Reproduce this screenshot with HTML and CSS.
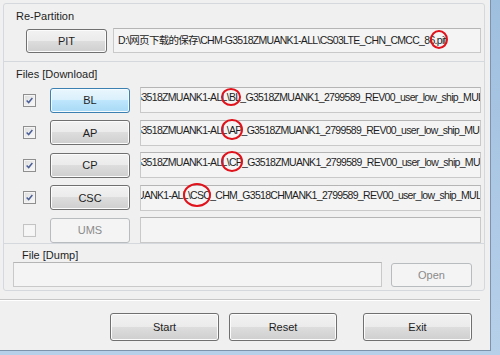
FILE: index.html
```html
<!DOCTYPE html>
<html lang="zh-CN">
<head>
  <meta charset="UTF-8" />
  <title>Odin - Files</title>
  <link rel="stylesheet" href="styles.css">
</head>
<body>
<div class="window">
  <div class="panel">
    <section class="group repart">
      <div class="caption">Re-Partition</div>
      <div class="pit-row">
        <button class="btn pit">PIT</button>
        <div class="field"><span class="txt">D:\网页下载的保存\CHM-G3518ZMUANK1-ALL\CS03LTE_CHN_CMCC_86<span class="mark m-pit">.pit</span></span></div>
      </div>
    </section>

    <section class="group files">
      <div class="caption">Files [Download]</div>
      <div class="rows">
        <span class="check on"><svg viewBox="0 0 11 11"><path d="M2 5.5 L4.5 8 L9 2.5"/></svg></span>
        <button class="btn hot">BL</button>
        <div class="field"><span class="txt cut">G3518ZMUANK1-ALL\<span class="mark m-bl">BL</span>_G3518ZMUANK1_2799589_REV00_user_low_ship_MULTI</span></div>

        <span class="check on"><svg viewBox="0 0 11 11"><path d="M2 5.5 L4.5 8 L9 2.5"/></svg></span>
        <button class="btn">AP</button>
        <div class="field"><span class="txt cut">G3518ZMUANK1-ALL\<span class="mark m-ap">AP</span>_G3518ZMUANK1_2799589_REV00_user_low_ship_MULTI</span></div>

        <span class="check on"><svg viewBox="0 0 11 11"><path d="M2 5.5 L4.5 8 L9 2.5"/></svg></span>
        <button class="btn">CP</button>
        <div class="field"><span class="txt cut">G3518ZMUANK1-ALL\<span class="mark m-cp">CP</span>_G3518ZMUANK1_2799589_REV00_user_low_ship_MULTI</span></div>

        <span class="check on"><svg viewBox="0 0 11 11"><path d="M2 5.5 L4.5 8 L9 2.5"/></svg></span>
        <button class="btn">CSC</button>
        <div class="field"><span class="txt cut2">UANK1-ALL\<span class="mark m-csc">CSC</span>_CHM_G3518CHMANK1_2799589_REV00_user_low_ship_MULTI</span></div>

        <span class="check"></span>
        <button class="btn off">UMS</button>
        <div class="field"></div>
      </div>
    </section>

    <section class="group dump">
      <div class="caption">File [Dump]</div>
      <div class="dump-row">
        <div class="field"></div>
        <button class="btn off open">Open</button>
      </div>
    </section>
  </div>

  <div class="sep"></div>

  <div class="actions">
    <button class="btn big">Start</button>
    <button class="btn big reset">Reset</button>
    <button class="btn big exit">Exit</button>
  </div>
</div>
</body>
</html>
```

FILE: styles.css
```css
:root {
  --bg: #f0f0f0;
  --line: #d5d8dc;
  --text: #1e1e1e;
  --red: #e0121b;
}

* { box-sizing: border-box; margin: 0; padding: 0; }

body {
  width: 500px;
  height: 355px;
  overflow: hidden;
  background: linear-gradient(#9fbfdf, #b7d0ea);
  font-family: 'Liberation Sans', Arial, 'Noto Sans CJK SC', sans-serif;
  font-size: 11px;
  color: var(--text);
}

.window {
  width: 491px;
  height: 351px;
  background: var(--bg);
  border-right: 1px solid #7c93ab;
  border-bottom: 1px solid #7c93ab;
  padding: 3px 0 0 3px;
}

.panel {
  width: 482px;
  height: 288px;
  border: 1px solid var(--line);
  border-radius: 3px;
  display: flex;
  flex-direction: column;
}

.group {
  padding: 6px 3px 0 0;
}

.group + .group {
  border-top: 1px solid var(--line);
}

.caption {
  line-height: 13px;
  padding-left: 12px;
}

/* re-partition */
.repart { height: 57px; }

.pit-row {
  display: flex;
  align-items: flex-start;
  margin-top: 5px;
}

.pit {
  flex: none;
  width: 81px;
  height: 24px;
  margin: 1px 6px 0 22px;
}

.pit-row .field {
  flex: 1;
  min-width: 0;
  height: 25px;
  padding: 5px 0 0 4px;
}

/* download rows */
.files { height: 182px; }

.rows {
  display: grid;
  grid-template-columns: 13px 80px minmax(0, 1fr);
  grid-auto-rows: 26px;
  column-gap: 14px;
  row-gap: 6.5px;
  align-items: center;
  padding-left: 19px;
  margin-top: 6px;
}

.rows .btn { height: 25px; }
.rows .btn + .field { margin-left: -4px; height: 26px; padding: 3px 0 0 1px; }

.check {
  width: 13px;
  height: 13px;
  border: 1px solid #8f8f8f;
  background: linear-gradient(135deg, #dcdcdc, #fbfbfb);
  box-shadow: inset 0 0 0 1px #f4f4f4;
  display: flex;
  align-items: center;
  justify-content: center;
}

.check svg { width: 9px; height: 9px; }
.check path { fill: none; stroke: #4a5f97; stroke-width: 1.8; }

.check:not(.on) {
  border-color: #c3c3c3;
  background: #f6f6f6;
}

/* fields */
.field {
  position: relative;
  background: #f4f4f4;
  border: 1px solid #c9c9c9;
  border-top-color: #b5b5b5;
  white-space: nowrap;
  overflow-x: clip;
}

.txt {
  display: block;
  font-size: 10.5px;
  letter-spacing: -0.7px;
  line-height: 13px;
}

.cut { text-indent: -8px; }
.cut2 { text-indent: -5px; }

.mark { position: relative; }

.mark::after {
  content: '';
  position: absolute;
  border: 2px solid var(--red);
  border-radius: 50%;
}

.m-bl::after { left: -8px; right: -1px; top: -3px; bottom: -3px; }
.m-ap::after, .m-cp::after { left: -8px; right: -1px; top: -5px; bottom: -4px; }
.m-csc::after { left: -7px; right: -1px; top: -6px; bottom: -6px; }
.m-pit::after { left: -5px; right: -2px; top: -4px; bottom: -3px; }

/* file dump */
.dump { flex: 1; padding-top: 5px; }
.dump .caption { padding-left: 18px; }

.dump-row {
  display: flex;
  align-items: flex-start;
  padding-left: 9px;
}

.dump-row .field { width: 369px; height: 25px; }

.open {
  width: 81px;
  height: 24px;
  margin: 1px 0 0 9px;
}

/* buttons */
.btn {
  font: inherit;
  color: var(--text);
  border: 1px solid #707070;
  border-radius: 3px;
  background: linear-gradient(#f2f2f2 0%, #ebebeb 49%, #dddddd 50%, #cfcfcf 100%);
  box-shadow: inset 0 0 0 1px #fcfcfc;
}

.btn.hot {
  border-color: #3c7fb1;
  background: linear-gradient(#eaf6fd 0%, #d9f0fc 49%, #bee6fd 50%, #a7d9f5 100%);
  box-shadow: inset 0 0 0 1px #f6fbfe;
}

.btn.off {
  color: #8b8b8b;
  border-color: #b8bcbf;
  background: #f4f4f4;
  box-shadow: none;
}

.sep {
  height: 2px;
  margin: 8px 0 0 -3px;
  width: 480px;
  background: #c6c6c6;
  border-bottom: 1px solid #fff;
}

.actions {
  display: flex;
  margin-top: 12px;
  padding-left: 107px;
}

.big { width: 109px; height: 28px; }
.reset { margin-left: 10px; width: 108px; }
.exit { margin-left: 26px; }
```
